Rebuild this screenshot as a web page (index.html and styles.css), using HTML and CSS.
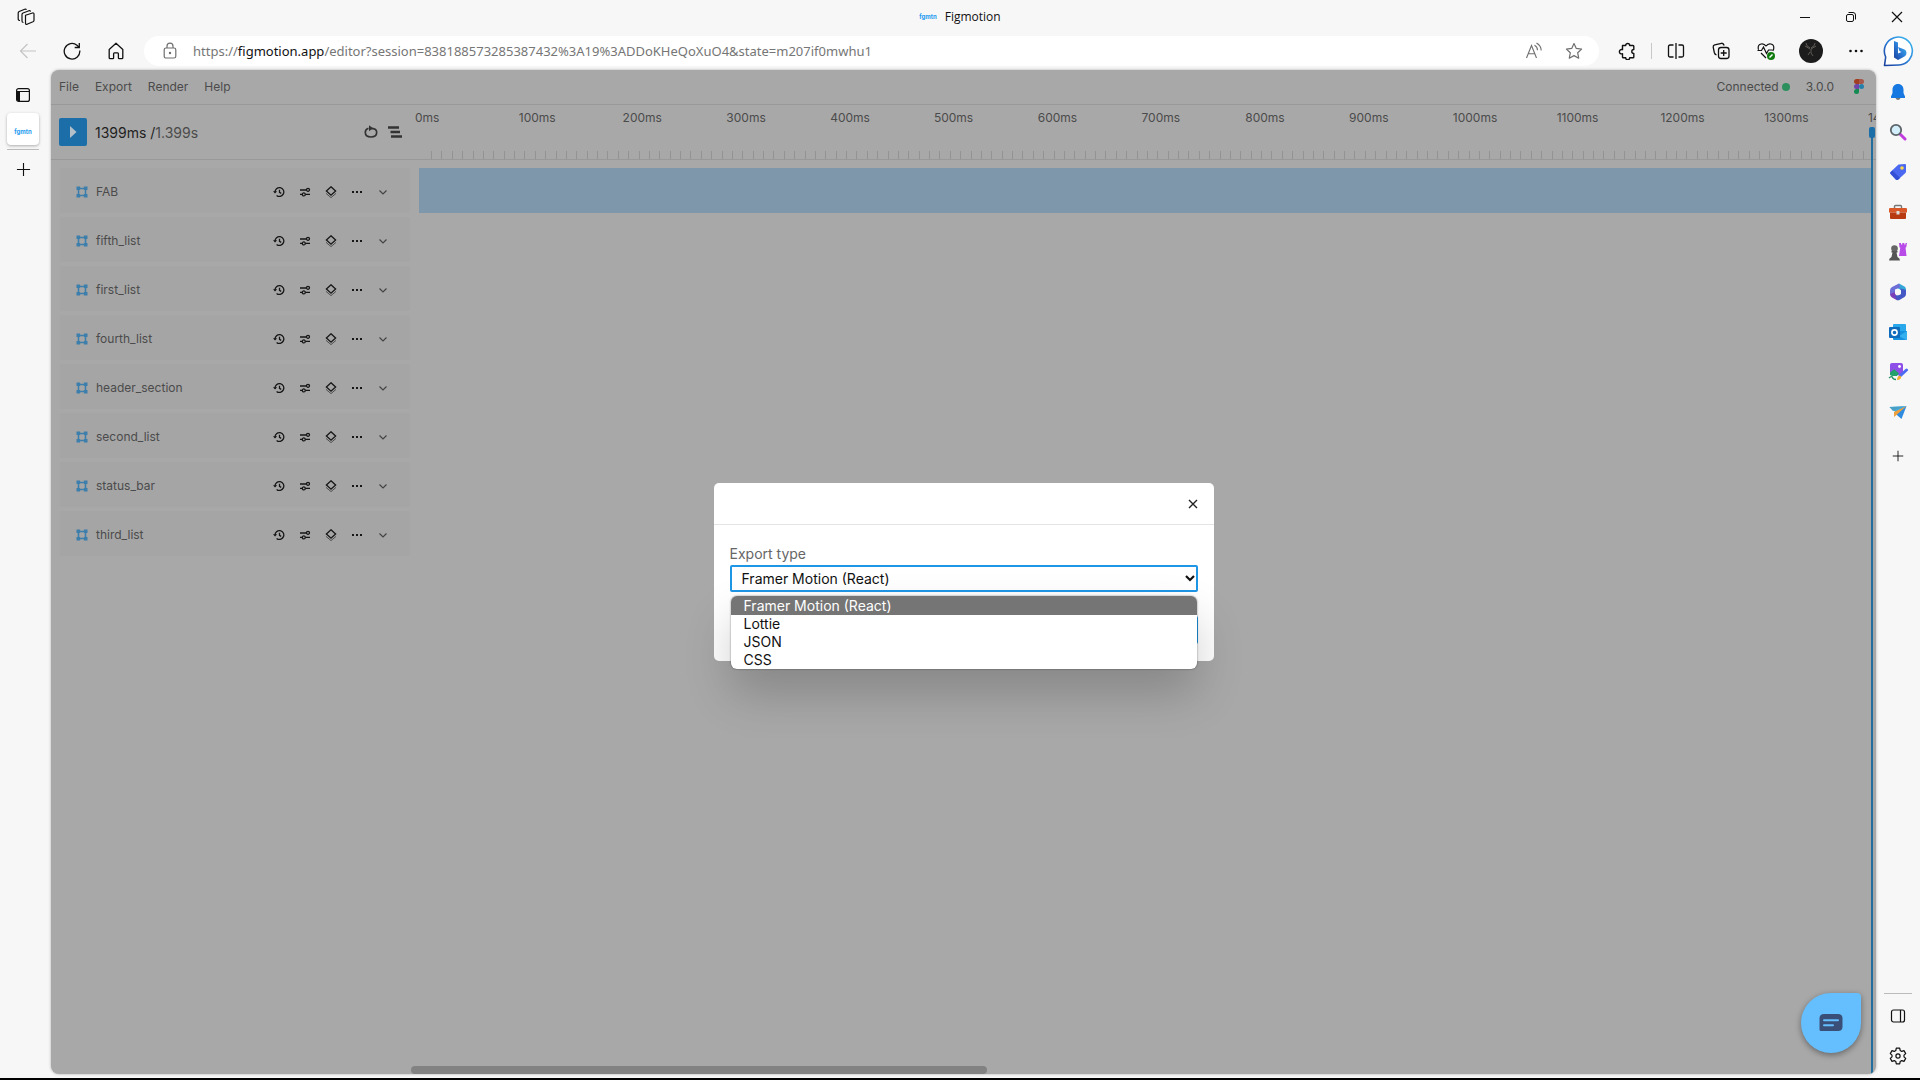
FILE: index.html
```html
<!DOCTYPE html>
<html lang="en">
<head>
  <meta charset="UTF-8">
  <meta name="viewport" content="width=device-width, initial-scale=1.0">
  <title>Figmotion</title>
  <link rel="stylesheet" href="styles.css">
</head>
<body>
  <!-- shared icons -->
  <svg class="sprite" aria-hidden="true">
    <symbol id="i-frame" viewBox="0 0 12 12">
      <path d="M2.5 2.5h7v7h-7z" fill="none" stroke="currentColor" stroke-width="1.6"/>
      <path d="M.5.5h3.6v3.6H.5zM7.9.5h3.6v3.6H7.9zM.5 7.9h3.6v3.6H.5zM7.9 7.9h3.6v3.6H7.9z" fill="currentColor"/>
    </symbol>
    <symbol id="i-history" viewBox="0 0 12 12">
      <path d="M2 6.2A4.4 4.4 0 1 1 3.6 9.4M6.5 3.8v2.6l1.7 1" fill="none" stroke="currentColor" stroke-width="1.3"/>
      <path d="M0 5.2h4.2L2 7.6z" fill="currentColor"/>
    </symbol>
    <symbol id="i-tune" viewBox="0 0 12 12">
      <g fill="none" stroke="currentColor" stroke-width="1.3">
        <path d="M1 4h6.4M1 8.3h2M6.4 8.3H11"/>
        <circle cx="9" cy="3.8" r="1.5"/><circle cx="4.8" cy="8.4" r="1.5"/>
      </g>
    </symbol>
    <symbol id="i-layers" viewBox="0 0 12 12">
      <path d="M6 .8L10.600 5 6 9.200 1.400 5z" fill="none" stroke="currentColor" stroke-width="1.3"/>
      <path d="M1 7.400L6 11.600l5-4.200" fill="none" stroke="currentColor" stroke-width="1" opacity=".6"/>
    </symbol>
    <symbol id="i-dots" viewBox="0 0 12 12">
      <path d="M1 5h2v2H1zM5 5h2v2H5zM9 5h2v2H9z" fill="currentColor"/>
    </symbol>
    <symbol id="i-chevron" viewBox="0 0 12 12">
      <path d="M2.5 4.5L6 8l3.500-3.500" fill="none" stroke="currentColor" stroke-width="1.2"/>
    </symbol>
    <symbol id="i-plus" viewBox="0 0 16 16">
      <path d="M8 1v14M1 8h14" fill="none" stroke="currentColor" stroke-width="1.2"/>
    </symbol>
  </svg>

  <header class="titlebar">
    <button class="icon-btn workspaces" aria-label="Workspaces">
      <svg width="18" height="18" viewBox="0 0 18 18" fill="none" stroke="currentColor" stroke-width="1.2" stroke-linejoin="round">
        <path d="M8.500 7.300l7-2.300q1.500-.3 1.500 1.200v6q0 1-1 1.500l-6 2.600q-1.500.4-1.500-1z"/>
        <path d="M6.500 14.500q-1.500 0-1.500-1.500V6.500q0-1 1-1.500l6-2.300q1.300-.3 1.500.9"/>
        <path d="M3 12.500q-1.800 0-1.800-1.500V5q0-1 1-1.500l5.500-2.300q1.300-.4 1.800.6"/>
      </svg>
    </button>
    <div class="tab-title"><span class="favicon">fgmtn</span>Figmotion</div>
    <div class="window-controls">
      <button class="icon-btn" aria-label="Minimize"><svg width="12" height="12" viewBox="0 0 12 12"><path d="M1 6.500h10" stroke="currentColor"/></svg></button>
      <button class="icon-btn" aria-label="Restore"><svg width="12" height="12" viewBox="0 0 12 12" fill="none" stroke="currentColor"><rect x="1.500" y="3.500" width="7" height="7" rx="1.500"/><path d="M3.500 1.500h4.500q2.500 0 2.500 2.500v4.500"/></svg></button>
      <button class="icon-btn" aria-label="Close"><svg width="12" height="12" viewBox="0 0 12 12"><path d="M1 1l10 10M11 1L1 11" stroke="currentColor" stroke-width="1.200"/></svg></button>
    </div>
  </header>

  <nav class="toolbar">
    <div class="nav-buttons">
      <button class="icon-btn back" aria-label="Back" disabled><svg width="18" height="18" viewBox="0 0 18 18" fill="none" stroke="currentColor" stroke-width="1.200"><path d="M17 9H2M8.500 2L1.500 9l7 7"/></svg></button>
      <button class="icon-btn" aria-label="Refresh"><svg width="18" height="18" viewBox="0 0 18 18" fill="none" stroke="currentColor" stroke-width="1.300"><path d="M16.800 8.500A7.800 7.800 0 1 1 14 3.200l2 1.900M16.300 1v4.500h-4.600"/></svg></button>
      <button class="icon-btn" aria-label="Home"><svg width="18" height="18" viewBox="0 0 18 18" fill="none" stroke="currentColor" stroke-width="1.300" stroke-linejoin="round"><path d="M2.200 7.500L9 1.300l6.800 6.200v8.300q0 .9-.9.900h-2.700q-.8 0-.8-.8v-4.200q0-.9-.8-.9H7.400q-.8 0-.8.900v4.200q0 .8-.8.800H3.100q-.9 0-.9-.9z"/></svg></button>
    </div>
    <div class="address">
      <svg class="lock" width="14" height="18" viewBox="0 0 14 18" fill="none" stroke="currentColor" stroke-width="1.200"><rect x="1.200" y="6" width="11.600" height="10" rx="1.800"/><path d="M4 6V4.200a3 3 0 0 1 6 0V6"/><circle cx="7" cy="11" r=".6" fill="currentColor"/></svg>
      <div class="url">https://<b>figmotion.app</b>/editor?session=838188573285387432%3A19%3ADDoKHeQoXuO4&amp;state=m207if0mwhu1</div>
      <button class="icon-btn muted" aria-label="Read aloud"><svg width="18" height="18" viewBox="0 0 18 18" fill="none" stroke="currentColor" stroke-width="1.100"><path d="M1.500 16L6.500 3.500 11.500 16M3.200 11.700h6.600M9.500 3.200q3 1.600 3 5M11.500 1q4.700 2.700 4.700 7.500"/></svg></button>
      <button class="icon-btn muted" aria-label="Favorite"><svg width="18" height="18" viewBox="0 0 18 18" fill="none" stroke="currentColor" stroke-width="1.200" stroke-linejoin="round"><path d="M9 1.500l2.300 4.900 5.300.7-3.900 3.700 1 5.400L9 13.600l-4.700 2.600 1-5.400L1.400 7.100l5.300-.7z"/></svg></button>
    </div>
    <div class="tools">
      <button class="icon-btn" aria-label="Extensions"><svg width="18" height="18" viewBox="0 0 18 18" fill="none" stroke="currentColor" stroke-width="1.400" stroke-linejoin="round"><path d="M4.500 3.500h3.200a2 2 0 0 1 4 0H15q.8 0 .8.800v3.200a2 2 0 0 0 0 4V15q0 .8-.8.800h-3.300a2 2 0 0 1-4 0H5.300q-.8 0-.8-.8v-3.300a2.200 2.200 0 1 1 0-4z"/></svg></button>
      <span class="divider"></span>
      <button class="icon-btn" aria-label="Split screen"><svg width="18" height="18" viewBox="0 0 18 18" fill="none" stroke="currentColor" stroke-width="1.300"><path d="M6.500 15H3q-1.500 0-1.500-1.500v-9Q1.500 3 3 3h3.500M11.500 3H15q1.500 0 1.500 1.500v9q0 1.500-1.500 1.500h-3.500M9 1v16"/></svg></button>
      <button class="icon-btn" aria-label="Collections"><svg width="18" height="18" viewBox="0 0 18 18" fill="none" stroke="currentColor" stroke-width="1.300"><rect x="6.500" y="5.500" width="10.500" height="11" rx="2.500"/><path d="M11.700 8v6M8.700 11h6M4.500 13Q2.800 12.500 2.300 10.500L1.200 5.200Q1 3.400 2.700 2.900L9.500 1.300q1.800-.3 2.700 2.200"/></svg></button>
      <button class="icon-btn" aria-label="Browser essentials"><svg width="18" height="18" viewBox="0 0 18 18" fill="none" stroke="currentColor" stroke-width="1.200"><path d="M9 4.200C6.500.5 1 1.500 1.200 6q0 .8.400 1.700M9 4.200C11.500.5 17 1.500 16.800 6q0 1.500-1 2.800M4 11l5 5M.5 8.500h4l2-3.500 3 6.500L11.500 8h4"/><circle cx="14" cy="14" r="4" fill="#107c10" stroke="none"/><path d="M12.500 15.500l3-3" stroke="#fff" stroke-width="1.400"/></svg></button>
      <button class="icon-btn" aria-label="Profile"><svg width="24" height="24" viewBox="0 0 24 24"><circle cx="12" cy="12" r="12" fill="#1c1c1c"/><path d="M7 4q0 3 4 5M16 4q0 3-4 5M6 7l5 3M17 7l-5 3v4l2 3M11 13l-2 3" fill="none" stroke="#5f5a55"/></svg></button>
      <button class="icon-btn" aria-label="Settings and more"><svg width="16" height="16" viewBox="0 0 16 16" fill="currentColor"><circle cx="2.500" cy="8" r="1.300"/><circle cx="8" cy="8" r="1.300"/><circle cx="13.500" cy="8" r="1.300"/></svg></button>
    </div>
    <button class="icon-btn bing" aria-label="Bing">
      <svg width="32" height="32" viewBox="0 0 32 32">
        <defs><linearGradient id="bing" x1="1" y1="0" x2="0" y2="1"><stop offset="0" stop-color="#41c0f2"/><stop offset=".5" stop-color="#2c7fd8"/><stop offset="1" stop-color="#1a3f9c"/></linearGradient></defs>
        <path d="M1.500 30.500L2.700 22A14 14 0 1 1 16 30z" fill="#fff" stroke="url(#bing)" stroke-width="1.600" stroke-linejoin="round"/>
        <path d="M11 6l4 1.600v11L18.500 17l-2-1-1.500-4 6.500 2.600q2 1 2 3.400 0 2.500-2 3.600L15 25l-4-2.500z" fill="url(#bing)"/>
      </svg>
    </button>
  </nav>

  <div class="workspace">
    <aside class="tab-rail">
      <button class="icon-btn" aria-label="Tab menu"><svg width="14" height="14" viewBox="0 0 14 14"><rect x=".6" y=".6" width="12.800" height="12.800" rx="2" fill="none" stroke="currentColor" stroke-width="1.200"/><path d="M.6 3.500h12.800" stroke="currentColor"/><path d="M1 3.500h3V13H2q-1 0-1-1z" fill="currentColor"/></svg></button>
      <button class="tab-card" aria-label="Figmotion tab"><span class="favicon">fgmtn</span></button>
      <span class="rail-line"></span>
      <button class="icon-btn" aria-label="New tab"><svg width="15" height="15"><use href="#i-plus"/></svg></button>
    </aside>

    <main class="app">
      <div class="menubar">
        <button>File</button>
        <button>Export</button>
        <button>Render</button>
        <button>Help</button>
        <span class="status">Connected<i></i></span>
        <span>3.0.0</span>
        <svg class="figma" width="10" height="15" viewBox="0 0 10 15">
          <path d="M2.500 0H5v5H2.500a2.500 2.500 0 0 1 0-5z" fill="#a13e22"/>
          <path d="M5 0h2.500a2.500 2.500 0 0 1 0 5H5z" fill="#a8584a"/>
          <path d="M2.500 5H5v5H2.500a2.500 2.500 0 0 1 0-5z" fill="#6f44a8"/>
          <circle cx="7.500" cy="7.500" r="2.500" fill="#2580ab"/>
          <path d="M2.500 10H5v2.500A2.500 2.500 0 1 1 2.500 10z" fill="#138a53"/>
        </svg>
      </div>

      <div class="timebar">
        <div class="transport">
          <button class="play" aria-label="Play"><svg width="8" height="12" viewBox="0 0 8 12"><path d="M1 0l6.500 6L1 12z" fill="#b4c0c9"/></svg></button>
          <span class="time"><b>1399ms /</b>1.399s</span>
          <button class="icon-btn" aria-label="Loop"><svg width="14" height="14" viewBox="0 0 14 14"><path d="M4.500 3.200Q1.300 4 1.300 7.300C1.300 10 3.500 12 7 12s5.700-2 5.700-4.700S10.500 3.300 6.500 3.300" fill="none" stroke="currentColor" stroke-width="1.700"/><path d="M5 .3l4 3-4 3z" fill="currentColor"/></svg></button>
          <button class="icon-btn" aria-label="Stagger"><svg width="16" height="14" viewBox="0 0 16 14"><path d="M1 2.500h11M3.500 7H13M4 11.500h11" stroke="currentColor" stroke-width="2.600"/></svg></button>
        </div>
        <div class="ruler">
          <div class="ruler-labels" id="labels"></div>
          <div class="ruler-ticks" id="ticks"></div>
        </div>
      </div>

      <div class="tracks" id="tracks"></div>
      <div class="scrollbar"></div>
      <div class="playhead"></div>
      <button class="chat" aria-label="Chat"><svg width="24" height="18" viewBox="0 0 24 18"><path d="M5 0h14q4.500 0 4.500 4.500v8q0 4.500-4.500 4.500H2Q.5 17 .5 15.500v-11Q.5 0 5 0z" fill="#3a4f78"/><path d="M5 6.300h14M5 11.300h9" stroke="#65bfff" stroke-width="2" stroke-linecap="round"/></svg></button>

      <div class="overlay">
        <section class="modal" role="dialog" aria-label="Export">
          <div class="modal-head">
            <button class="icon-btn" aria-label="Close dialog"><svg width="10" height="10" viewBox="0 0 10 10"><path d="M1 1l8 8M9 1L1 9" stroke="currentColor" stroke-width="1.400"/></svg></button>
          </div>
          <div class="modal-body">
            <label for="exportType">Export type</label>
            <div class="select-wrap">
              <select id="exportType">
                <option>Framer Motion (React)</option>
                <option>Lottie</option>
                <option>JSON</option>
                <option>CSS</option>
              </select>
              <svg class="caret" width="10" height="8" viewBox="0 0 10 8"><path d="M1 2l4 4 4-4" fill="none" stroke="#111" stroke-width="2.200"/></svg>
              <ul class="options">
                <li class="selected">Framer Motion (React)</li>
                <li>Lottie</li>
                <li>JSON</li>
                <li>CSS</li>
              </ul>
            </div>
            <button class="submit" aria-label="Export"></button>
          </div>
        </section>
      </div>
    </main>

    <aside class="sidebar">
      <button class="icon-btn" aria-label="Notifications"><svg width="18" height="18" viewBox="0 0 18 18"><path d="M6.500 15h5q-.8 2-2.500 2t-2.500-2z" fill="#777"/><path d="M9 1C5.500 1 3.500 3.500 3.500 6.500V10L2 13.500V15h14v-1.500L14.500 10V6.500C14.500 3.500 12.500 1 9 1z" fill="#1678e0"/></svg></button>
      <button class="icon-btn" aria-label="Search"><svg width="18" height="18" viewBox="0 0 18 18"><path d="M11 11l5 5" stroke="#c23ce0" stroke-width="3" stroke-linecap="round"/><circle cx="7" cy="7" r="5.200" fill="#d4effc" stroke="#5d6468" stroke-width="1.800"/></svg></button>
      <button class="icon-btn" aria-label="Shopping"><svg width="18" height="18" viewBox="0 0 18 18"><path d="M9.500 1.500L16 1q1 0 1 1v6.500q0 .8-.6 1.400L9 16.700q-1 .8-2 0L1.500 11q-.8-1 0-2z" fill="#4a69f0"/><path d="M1.500 10.500L7 16.700q1 .8 2 0l2-1.800L3.500 7.500l-2 2z" fill="#3350d4"/><circle cx="13" cy="5" r="1.800" fill="#ffd84a"/></svg></button>
      <button class="icon-btn" aria-label="Tools"><svg width="18" height="18" viewBox="0 0 18 18"><path d="M5.500 5V3.500q0-1 1-1h5q1 0 1 1V5" fill="none" stroke="#777" stroke-width="1.400"/><path d="M1 5h16q1 0 1 1v3.500H0V6q0-1 1-1z" fill="#d8582a"/><path d="M1 9.500h16V15q0 1-1 1H2q-1 0-1-1z" fill="#b83a12"/><path d="M7.500 8h3v3.500h-3z" fill="#ddd"/></svg></button>
      <button class="icon-btn" aria-label="Games"><svg width="20" height="20" viewBox="0 0 20 20"><path d="M11 1h2v1.500h1.300V1h2v1.500h1.200V1H19l-.8 4.500h-.7l1 8.500H11l1.300-8.500h-.8z" fill="#b84ae8"/><circle cx="6.500" cy="6.500" r="3.300" fill="#666"/><path d="M3.500 9h6v1.500H8.500l1 4.500q2.500 1 2.500 3.500H1Q1 16 3.500 15l1-4.500h-1z" fill="#555"/></svg></button>
      <button class="icon-btn" aria-label="Microsoft 365"><svg width="18" height="18" viewBox="0 0 18 18"><path d="M10 .5l5.500 3Q17 4.500 17 6.500v3L11.500 7 7 4.500z" fill="#33a8d8"/><path d="M10 .5L3 4Q1 5.200 1 7.500v4l5-2V6.500l5.500-2z" fill="#6c6fd8"/><path d="M1 11l5-2 1 3.500 4.500 1L8 17.300 3 14.500Q1 13 1 11z" fill="#7a3fb8"/><path d="M17 7v4q0 2-1.500 3L10 17.300H8l-2-4.500 5.500-1.300V5.500z" fill="#4358c4"/><path d="M9 5.500l3 1.700v3.600l-3 1.700-3-1.700V7.200z" fill="#f7f7f7"/></svg></button>
      <button class="icon-btn" aria-label="Outlook"><svg width="18" height="18" viewBox="0 0 18 18"><path d="M5 1h11q1 0 1 1v7H4V2q0-1 1-1z" fill="#28a8ea"/><path d="M4 8h14v8q0 1-1 1H5q-1 0-1-1z" fill="#1490df"/><path d="M18 8l-8 5 7 4q1 0 1-1z" fill="#34b0ee"/><rect y="4" width="11" height="11" rx="1" fill="#0f6cbd"/><circle cx="5.500" cy="9.500" r="2.600" fill="none" stroke="#fff" stroke-width="1.600"/></svg></button>
      <button class="icon-btn" aria-label="Image Creator"><svg width="20" height="20" viewBox="0 0 20 20"><rect x="2" y="1" width="13" height="12" rx="2" fill="#8d4fe8"/><path d="M2 13V10.500l4-3.200 5 4L9 14H4z" fill="#24a06b"/><circle cx="11.500" cy="4.500" r="1.400" fill="#fff"/><path d="M18.500 8L12 14" stroke="#4d6bf2" stroke-width="3" stroke-linecap="round"/><path d="M9 18q0-4 3-4.500l1.200 1.300Q13 18 9 18z" fill="#f5b02e"/><path d="M1 16q3-2.500 3.500-.5T8 17.500" fill="none" stroke="#249060" stroke-width="1.300"/></svg></button>
      <button class="icon-btn" aria-label="Drop"><svg width="18" height="18" viewBox="0 0 18 18"><path d="M.5 4L17.500 3 7 9.500z" fill="#3cb0f0"/><path d="M17.500 3L12.500 16 5 9.500z" fill="#2f8be0"/><path d="M17.500 3L5 9v5l3-2.500z" fill="#f0a03a"/><path d="M.5 4l15-.5L4 8z" fill="#4a9fc4"/></svg></button>
      <button class="icon-btn add" aria-label="Customize"><svg width="12" height="12"><use href="#i-plus"/></svg></button>
      <span class="sidebar-line"></span>
      <button class="icon-btn" aria-label="Hide sidebar"><svg width="16" height="14" viewBox="0 0 16 14" fill="none" stroke="currentColor" stroke-width="1.200"><rect x="1.500" y="1" width="13" height="12" rx="2"/><path d="M10.500 1v12"/></svg></button>
      <button class="icon-btn" aria-label="Settings"><svg width="18" height="18" viewBox="0 0 18 18" fill="none" stroke="currentColor" stroke-width="1.200" stroke-linejoin="round"><path d="M7.300 1.200h3.400l.5 2.300 1.500.9 2.300-.8 1.700 3-1.700 1.500v1.800l1.700 1.500-1.700 3-2.300-.8-1.500.9-.5 2.300H7.300l-.5-2.300-1.500-.9-2.300.8-1.700-3L3 9.900V8.100L1.300 6.600l1.700-3 2.300.8 1.500-.9z"/><circle cx="9" cy="9" r="2.100"/></svg></button>
    </aside>
  </div>

  <script>
    const labels = document.getElementById('labels');
    for (let ms = 0; ms <= 1400; ms += 100) {
      const label = document.createElement('span');
      label.textContent = ms + 'ms';
      labels.appendChild(label);
    }

    const ticks = document.getElementById('ticks');
    for (let i = 0; i < 139; i++) {
      ticks.appendChild(document.createElement('i'));
    }

    const layers = ['FAB', 'fifth_list', 'first_list', 'fourth_list', 'header_section', 'second_list', 'status_bar', 'third_list'];
    const actions = ['history', 'tune', 'layers', 'dots', 'chevron'];
    document.getElementById('tracks').innerHTML = layers.map(function (name, i) {
      const buttons = actions.map(function (a) {
        return '<button class="icon-btn ' + a + '" aria-label="' + a + '"><svg width="12" height="12"><use href="#i-' + a + '"/></svg></button>';
      }).join('');
      return '<div class="track"><div class="track-head">' +
        '<svg class="frame" width="12" height="12"><use href="#i-frame"/></svg>' +
        '<span class="name">' + name + '</span>' + buttons + '</div>' +
        (i === 0 ? '<div class="clip"></div>' : '') + '</div>';
    }).join('');
  </script>
</body>
</html>
```

FILE: styles.css
```css
* {
  box-sizing: border-box;
}

body {
  margin: 0;
  height: 100vh;
  display: flex;
  flex-direction: column;
  background: #f7f7f7;
  border-bottom: 2px solid #000;
  font-family: Inter, "Liberation Sans", sans-serif;
  font-size: 12px;
  color: #111;
  overflow: hidden;
}

button {
  font: inherit;
  color: inherit;
  background: none;
  border: none;
  padding: 0;
}

.sprite {
  position: absolute;
  width: 0;
  height: 0;
}

.icon-btn {
  display: flex;
  align-items: center;
  justify-content: center;
  flex: none;
}

.favicon {
  font: bold 6px Inter, sans-serif;
  color: #1e9bf0;
}

/* browser chrome */
.titlebar {
  display: grid;
  grid-template-columns: 1fr auto 1fr;
  align-items: center;
  height: 33px;
  font-family: "Open Sans", "Noto Sans", sans-serif;
}

.workspaces {
  width: 52px;
}

.tab-title {
  display: flex;
  align-items: center;
  gap: 8px;
}

.window-controls {
  display: flex;
  justify-content: flex-end;
}

.window-controls button {
  width: 46px;
  height: 32px;
}

.toolbar {
  display: flex;
  align-items: center;
  height: 37px;
  padding-bottom: 2px;
}

.nav-buttons {
  display: flex;
  padding-left: 6px;
  width: 144px;
}

.nav-buttons button {
  width: 44px;
}

.back {
  color: #c4c4c4;
}

.address {
  flex: 1;
  display: flex;
  align-items: center;
  height: 30px;
  padding: 0 5px 0 19px;
  background: #fff;
  border-radius: 15px;
  color: #6f6f6f;
}

.lock {
  margin-right: 16px;
}

.url {
  flex: 1;
  font: 13px/18px "Noto Sans", "Open Sans", sans-serif;
  white-space: nowrap;
  color: #767676;
}

.url b {
  font-weight: normal;
  color: #111;
}

.address .icon-btn {
  width: 40px;
}

.tools {
  display: flex;
  align-items: center;
  padding-left: 5px;
}

.tools .icon-btn {
  width: 45px;
}

.divider {
  width: 1px;
  height: 16px;
  margin: 0 1px 0 2px;
  background: #c8c8c8;
}

.bing {
  width: 42px;
}

.workspace {
  flex: 1;
  display: flex;
  min-height: 0;
}

.tab-rail {
  width: 51px;
  padding: 18px 5px 0 0;
  display: flex;
  flex-direction: column;
  align-items: center;
}

.tab-card {
  width: 32px;
  height: 32px;
  margin-top: 11px;
  background: #fff;
  border-radius: 4px;
  box-shadow: 0 1px 3px rgba(0, 0, 0, 0.3);
}

.rail-line {
  width: 32px;
  height: 1px;
  margin: 4px 0 12px;
  background: #bbb;
}

.sidebar {
  width: 44px;
  padding: 2px 0;
  display: flex;
  flex-direction: column;
  align-items: center;
}

.sidebar .icon-btn {
  width: 44px;
  height: 40px;
}

.sidebar .add {
  margin-top: 4px;
}

.sidebar-line {
  width: 28px;
  height: 1px;
  margin: auto 0 2px;
  background: #bbb;
}

/* editor */
.app {
  flex: 1;
  min-width: 0;
  margin-bottom: 4px;
  position: relative;
  display: flex;
  flex-direction: column;
  background: #a8a8a8;
  color: #4b4b4b;
  border-radius: 8px;
  overflow: hidden;
  box-shadow: 0 0 3px rgba(0, 0, 0, 0.3);
}

.menubar {
  display: flex;
  align-items: center;
  gap: 16px;
  height: 35px;
  padding: 0 12px 2px 8px;
  border-bottom: 1px solid #999;
}

.status {
  margin-left: auto;
  display: flex;
  align-items: center;
  gap: 3px;
}

.status i {
  width: 8px;
  height: 8px;
  margin-top: 2px;
  border-radius: 50%;
  background: #2c8f5e;
}

.figma {
  margin-left: 4px;
}

.timebar {
  display: grid;
  grid-template-columns: 360px 1fr;
  height: 55px;
  border-bottom: 1px solid #999;
}

.transport {
  display: flex;
  align-items: center;
  padding: 0 4px 0 8px;
}

.play {
  display: flex;
  align-items: center;
  justify-content: center;
  width: 28px;
  height: 28px;
  background: #1c6ea8;
  border-radius: 2px;
}

.time {
  flex: 1;
  padding-left: 8px;
  font-size: 14px;
}

.time b {
  font-weight: normal;
  color: #1f1f1f;
}

.transport .icon-btn {
  width: 24px;
  color: #333;
}

.ruler {
  display: flex;
  flex-direction: column;
  justify-content: space-between;
  min-width: 0;
  padding-left: 4px;
  overflow: hidden;
}

.ruler-labels {
  display: grid;
  grid-template-columns: repeat(14, minmax(0, 1fr)) 8px;
  padding-top: 4px;
  line-height: 18px;
  white-space: nowrap;
}

.ruler-ticks {
  display: flex;
  height: 8px;
  margin: 0 2px 0 16px;
}

.ruler-ticks i {
  flex: 1;
  border-left: 1px solid #939393;
}

.tracks {
  flex: 1;
  display: flex;
  flex-direction: column;
  gap: 4px;
  padding: 8px 5px 0 9px;
}

.track {
  display: flex;
  gap: 9px;
}

.track-head {
  display: flex;
  align-items: center;
  width: 350px;
  height: 45px;
  padding: 2px 14px 0 16px;
  background: #a5a5a5;
  border-radius: 2px;
}

.track-head .icon-btn {
  width: 26px;
  color: #161616;
}

.track-head .chevron {
  color: #444;
}

.frame {
  color: #3d7fac;
}

.name {
  flex: 1;
  padding-left: 8px;
}

.clip {
  flex: 1;
  background: #7f97aa;
}

.scrollbar {
  width: 576px;
  height: 8px;
  margin-left: 360px;
  background: #828282;
  border-radius: 4px;
}

.playhead {
  position: absolute;
  top: 57px;
  right: 3px;
  bottom: 0;
  width: 2px;
  background: #226f9e;
}

.playhead::before {
  content: "";
  position: absolute;
  left: -2px;
  width: 6px;
  height: 11px;
  border-radius: 2px;
  background: #1c6ea8;
}

.chat {
  position: absolute;
  right: 15px;
  bottom: 21px;
  display: flex;
  align-items: center;
  justify-content: center;
  width: 60px;
  height: 60px;
  background: #65bfff;
  border-radius: 50% 4px 50% 50%;
  box-shadow: 0 2px 6px rgba(0, 0, 0, 0.4);
}

/* export dialog */
.overlay {
  position: absolute;
  inset: 0;
  display: flex;
  align-items: center;
  justify-content: center;
  pointer-events: none;
}

.modal {
  width: 500px;
  background: #fff;
  border-radius: 5px;
  pointer-events: auto;
  font-size: 14px;
}

.modal-head {
  display: flex;
  align-items: center;
  justify-content: flex-end;
  height: 42px;
  padding-right: 16px;
  border-bottom: 1px solid #e5e5e5;
  color: #222;
}

.modal-body {
  display: flex;
  flex-direction: column;
  padding: 20px 16px 17px;
}

.modal-body label {
  margin-bottom: 2px;
  line-height: 18px;
  color: #666;
}

.select-wrap {
  position: relative;
}

.select-wrap select {
  display: block;
  appearance: none;
  width: 100%;
  height: 27px;
  padding: 0 10px;
  font: inherit;
  color: #111;
  background: #fff;
  border: 2px solid #1e96e6;
  border-radius: 2px;
  outline: none;
}

.caret {
  position: absolute;
  right: 3px;
  top: 9px;
}

.options {
  position: absolute;
  top: 31px;
  left: 1px;
  right: 1px;
  margin: 0;
  padding: 1px 0 0;
  list-style: none;
  line-height: 18px;
  color: #111;
  background: #fff;
  border-radius: 6px;
  overflow: hidden;
  box-shadow: 0 0 2px rgba(0, 0, 0, 0.5), 0 24px 48px rgba(0, 0, 0, 0.2);
}

.options li {
  padding: 0 13px;
}

.options .selected {
  margin-top: -1px;
  padding-top: 1px;
  background: #757575;
  color: #fff;
}

.submit {
  align-self: flex-end;
  width: 80px;
  height: 28px;
  margin-top: 24px;
  background: #1e96e6;
  border-radius: 2px;
}
```
